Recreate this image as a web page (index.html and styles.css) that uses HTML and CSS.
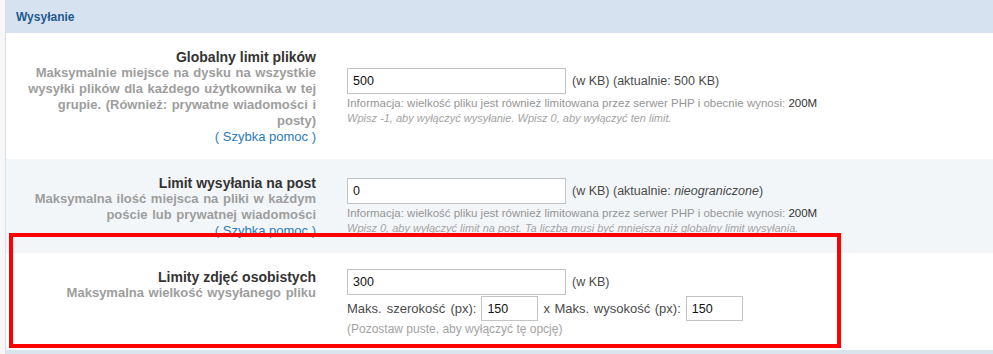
FILE: index.html
```html
<!DOCTYPE html>
<html lang="pl">
<head>
    <meta charset="UTF-8">
    <title>Wysyłanie</title>
    <link rel="stylesheet" href="styles.css">
</head>
<body>
    <div class="panel">
        <div class="panel-head">Wysyłanie</div>

        <div class="opt">
            <div class="opt-label">
                <label for="maxAttach">Globalny limit plików</label>
                <span class="explain">Maksymalnie miejsce na dysku na wszystkie wysyłki plików dla każdego użytkownika w tej grupie. (Również: prywatne wiadomości i<br>posty)</span>
                <span class="help">( <a href="#">Szybka pomoc</a> )</span>
            </div>
            <div class="opt-field">
                <div class="line">
                    <input type="text" id="maxAttach" class="wide" value="500">
                    <span>(w KB) (aktualnie: 500 KB)</span>
                </div>
                <div class="info">Informacja: wielkość pliku jest również limitowana przez serwer PHP i obecnie wynosi: <span class="val">200M</span></div>
                <div class="note">Wpisz -1, aby wyłączyć wysyłanie. Wpisz 0, aby wyłączyć ten limit.</div>
            </div>
        </div>

        <div class="opt alt">
            <div class="opt-label">
                <label for="maxPost">Limit wysyłania na post</label>
                <span class="explain">Maksymalna ilość miejsca na pliki w każdym poście lub prywatnej wiadomości</span>
                <span class="help">( <a href="#">Szybka pomoc</a> )</span>
            </div>
            <div class="opt-field">
                <div class="line">
                    <input type="text" id="maxPost" class="wide" value="0">
                    <span>(w KB) (aktualnie: <em>nieograniczone</em>)</span>
                </div>
                <div class="info">Informacja: wielkość pliku jest również limitowana przez serwer PHP i obecnie wynosi: <span class="val">200M</span></div>
                <div class="note">Wpisz 0, aby wyłączyć limit na post. Ta liczba musi być mniejsza niż globalny limit wysyłania.</div>
            </div>
        </div>

        <div class="opt">
            <div class="opt-label">
                <label for="avatarSize">Limity zdjęć osobistych</label>
                <span class="explain">Maksymalna wielkość wysyłanego pliku</span>
            </div>
            <div class="opt-field">
                <div class="line">
                    <input type="text" id="avatarSize" class="wide" value="300">
                    <span>(w KB)</span>
                </div>
                <div class="line dims">
                    <span>Maks. szerokość (px):</span>
                    <input type="text" class="small" value="150">
                    <span class="dims-second">x Maks. wysokość (px):</span>
                    <input type="text" class="small" value="150">
                </div>
                <div class="hint">(Pozostaw puste, aby wyłączyć tę opcję)</div>
            </div>
        </div>
    </div>

    <div class="highlight"></div>
</body>
</html>
```

FILE: styles.css
```css
* {
    margin: 0;
    padding: 0;
    box-sizing: border-box;
}

body {
    font-family: "Liberation Sans", Arial, sans-serif;
    background-color: #f7f7f7;
    height: 354px;
    overflow: hidden;
}

.panel {
    margin-left: 5px;
    border-left: 1px solid #d6dee8;
    border-bottom: 4px solid #dae4ef;
    background-color: white;
}

.panel-head {
    height: 33px;
    padding: 10px 10px 0;
    background-color: #d6e2ef;
    color: #1f5a91;
    font-size: 12px;
    font-weight: bold;
}

.opt {
    display: grid;
    grid-template-columns: 324px 1fr;
    padding: 16px 0 14px;
}

.opt.alt {
    background-color: #f3f6f9;
}

.opt-label {
    padding: 0 14px 0 12px;
    text-align: right;
    font-size: 13px;
    line-height: 16px;
    font-weight: bold;
}

.opt-label label {
    display: block;
    font-size: 14px;
    color: #333;
}

.explain {
    display: block;
    color: #9d9d9d;
    word-spacing: 1px;
}

.help {
    display: block;
    font-weight: normal;
    color: #2b7bc0;
}

.help a {
    color: #2b7bc0;
    text-decoration: none;
}

.opt-field {
    align-self: center;
    padding-left: 17px;
    font-size: 12.5px;
    color: #4a4a4a;
}

.line {
    display: flex;
    align-items: center;
    gap: 6px;
}

.dims {
    margin-top: 1px;
    gap: 5px;
    font-size: 13px;
    word-spacing: 1.5px;
}

.dims-second {
    word-spacing: 1px;
}

input[type="text"] {
    height: 26px;
    padding: 0 5px;
    border: 1px solid #c3c3c3;
    background-color: white;
    font-family: "Liberation Sans", Arial, sans-serif;
    font-size: 12.5px;
    color: #111;
}

input.wide {
    width: 219px;
}

input.small {
    width: 57px;
    height: 25px;
}

.info,
.note,
.hint {
    line-height: 15px;
    color: #959595;
}

.info {
    margin-top: 2px;
    font-size: 11.5px;
}

.info .val {
    color: #333;
}

.note {
    font-size: 11px;
    font-style: italic;
    color: #a3a3a3;
}

.hint {
    margin-top: 1px;
    font-size: 12px;
    line-height: 14px;
    color: #a3a3a3;
}

.highlight {
    position: absolute;
    left: 9px;
    top: 233px;
    width: 832px;
    height: 115px;
    border: 4px solid #ff0000;
}
```
